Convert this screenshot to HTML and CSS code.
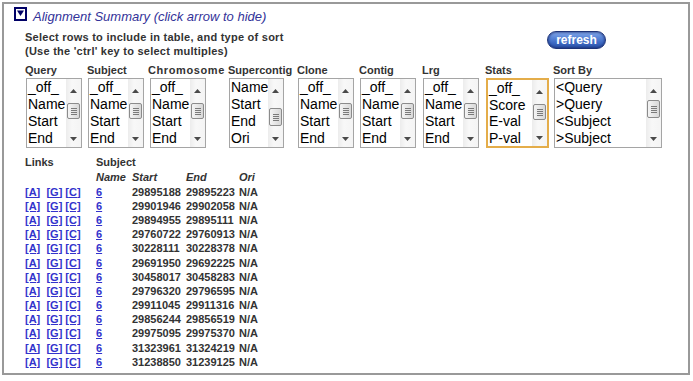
FILE: index.html
```html
<!DOCTYPE html>
<html>
<head>
<meta charset="utf-8">
<title>Alignment Summary</title>
<link rel="stylesheet" href="styles.css">
</head>
<body>
<div class="panel">
  <div class="title">
    <span class="toggle"><svg width="13" height="14" viewBox="0 0 13 14"><rect x="1" y="1" width="11" height="12" fill="#fff" stroke="#000066" stroke-width="2"/><polygon points="3,3.5 10,3.5 6.5,9" fill="#000066"/></svg></span>
    <span class="title-text">Alignment Summary (click arrow to hide)</span>
  </div>

  <div class="intro">
    <div class="help">Select rows to include in table, and type of sort<br>(Use the 'ctrl' key to select multiples)</div>
    <button class="refresh" type="button">refresh</button>
  </div>

  <div class="pickers">
    <div class="picker c-query">
      <div class="plabel">Query</div>
      <div class="listbox">
        <div class="opts"><div>_off_</div><div>Name</div><div>Start</div><div>End</div></div>
        <div class="sb"><div class="up"><svg width="7" height="4"><polygon points="0,4 7,4 3.5,0" fill="#4a4a4a"/></svg></div><div class="thumb"><svg width="6" height="7"><path d="M0 0.5H6M0 2.5H6M0 4.5H6M0 6.5H6" stroke="#7a7a7a" stroke-width="1"/></svg></div><div class="fill"></div><div class="down"><svg width="7" height="4"><polygon points="0,0 7,0 3.5,4" fill="#4a4a4a"/></svg></div></div>
      </div>
    </div>
    <div class="picker c-subject">
      <div class="plabel">Subject</div>
      <div class="listbox">
        <div class="opts"><div>_off_</div><div>Name</div><div>Start</div><div>End</div></div>
        <div class="sb"><div class="up"><svg width="7" height="4"><polygon points="0,4 7,4 3.5,0" fill="#4a4a4a"/></svg></div><div class="thumb"><svg width="6" height="7"><path d="M0 0.5H6M0 2.5H6M0 4.5H6M0 6.5H6" stroke="#7a7a7a" stroke-width="1"/></svg></div><div class="fill"></div><div class="down"><svg width="7" height="4"><polygon points="0,0 7,0 3.5,4" fill="#4a4a4a"/></svg></div></div>
      </div>
    </div>
    <div class="picker c-chrom">
      <div class="plabel lbl-chrom">Chromosome</div>
      <div class="listbox">
        <div class="opts"><div>_off_</div><div>Name</div><div>Start</div><div>End</div></div>
        <div class="sb"><div class="up"><svg width="7" height="4"><polygon points="0,4 7,4 3.5,0" fill="#4a4a4a"/></svg></div><div class="thumb"><svg width="6" height="7"><path d="M0 0.5H6M0 2.5H6M0 4.5H6M0 6.5H6" stroke="#7a7a7a" stroke-width="1"/></svg></div><div class="fill"></div><div class="down"><svg width="7" height="4"><polygon points="0,0 7,0 3.5,4" fill="#4a4a4a"/></svg></div></div>
      </div>
    </div>
    <div class="picker c-super">
      <div class="plabel">Supercontig</div>
      <div class="listbox lb-super">
        <div class="opts"><div>Name</div><div>Start</div><div>End</div><div>Ori</div></div>
        <div class="sb"><div class="up"><svg width="7" height="4"><polygon points="0,4 7,4 3.5,0" fill="#4a4a4a"/></svg></div><div class="thumb thumb-super"><svg width="6" height="7"><path d="M0 0.5H6M0 2.5H6M0 4.5H6M0 6.5H6" stroke="#7a7a7a" stroke-width="1"/></svg></div><div class="fill"></div><div class="down"><svg width="7" height="4"><polygon points="0,0 7,0 3.5,4" fill="#4a4a4a"/></svg></div></div>
      </div>
    </div>
    <div class="picker c-clone">
      <div class="plabel">Clone</div>
      <div class="listbox">
        <div class="opts"><div>_off_</div><div>Name</div><div>Start</div><div>End</div></div>
        <div class="sb"><div class="up"><svg width="7" height="4"><polygon points="0,4 7,4 3.5,0" fill="#4a4a4a"/></svg></div><div class="thumb"><svg width="6" height="7"><path d="M0 0.5H6M0 2.5H6M0 4.5H6M0 6.5H6" stroke="#7a7a7a" stroke-width="1"/></svg></div><div class="fill"></div><div class="down"><svg width="7" height="4"><polygon points="0,0 7,0 3.5,4" fill="#4a4a4a"/></svg></div></div>
      </div>
    </div>
    <div class="picker c-contig">
      <div class="plabel">Contig</div>
      <div class="listbox">
        <div class="opts"><div>_off_</div><div>Name</div><div>Start</div><div>End</div></div>
        <div class="sb"><div class="up"><svg width="7" height="4"><polygon points="0,4 7,4 3.5,0" fill="#4a4a4a"/></svg></div><div class="thumb"><svg width="6" height="7"><path d="M0 0.5H6M0 2.5H6M0 4.5H6M0 6.5H6" stroke="#7a7a7a" stroke-width="1"/></svg></div><div class="fill"></div><div class="down"><svg width="7" height="4"><polygon points="0,0 7,0 3.5,4" fill="#4a4a4a"/></svg></div></div>
      </div>
    </div>
    <div class="picker c-lrg">
      <div class="plabel">Lrg</div>
      <div class="listbox">
        <div class="opts"><div>_off_</div><div>Name</div><div>Start</div><div>End</div></div>
        <div class="sb"><div class="up"><svg width="7" height="4"><polygon points="0,4 7,4 3.5,0" fill="#4a4a4a"/></svg></div><div class="thumb"><svg width="6" height="7"><path d="M0 0.5H6M0 2.5H6M0 4.5H6M0 6.5H6" stroke="#7a7a7a" stroke-width="1"/></svg></div><div class="fill"></div><div class="down"><svg width="7" height="4"><polygon points="0,0 7,0 3.5,4" fill="#4a4a4a"/></svg></div></div>
      </div>
    </div>
    <div class="picker c-stats">
      <div class="plabel">Stats</div>
      <div class="listbox lb-stats">
        <div class="opts"><div>_off_</div><div>Score</div><div>E-val</div><div>P-val</div></div>
        <div class="sb"><div class="up"><svg width="7" height="4"><polygon points="0,4 7,4 3.5,0" fill="#4a4a4a"/></svg></div><div class="thumb"><svg width="6" height="7"><path d="M0 0.5H6M0 2.5H6M0 4.5H6M0 6.5H6" stroke="#7a7a7a" stroke-width="1"/></svg></div><div class="fill"></div><div class="down"><svg width="7" height="4"><polygon points="0,0 7,0 3.5,4" fill="#4a4a4a"/></svg></div></div>
      </div>
    </div>
    <div class="picker c-sort">
      <div class="plabel">Sort By</div>
      <div class="listbox lb-sort">
        <div class="opts"><div>&lt;Query</div><div>&gt;Query</div><div>&lt;Subject</div><div>&gt;Subject</div></div>
        <div class="sb"><div class="up"><svg width="7" height="4"><polygon points="0,4 7,4 3.5,0" fill="#4a4a4a"/></svg></div><div class="thumb thumb-sort"><svg width="6" height="7"><path d="M0 0.5H6M0 2.5H6M0 4.5H6M0 6.5H6" stroke="#7a7a7a" stroke-width="1"/></svg></div><div class="fill"></div><div class="down"><svg width="7" height="4"><polygon points="0,0 7,0 3.5,4" fill="#4a4a4a"/></svg></div></div>
      </div>
    </div>
  </div>

  <table class="results">
    <colgroup><col class="k-links"><col class="k-name"><col class="k-start"><col class="k-end"><col class="k-ori"></colgroup>
    <thead>
      <tr class="h1"><th>Links</th><th colspan="4">Subject</th></tr>
      <tr class="h2"><th></th><th class="it">Name</th><th class="it">Start</th><th class="it">End</th><th class="it">Ori</th></tr>
    </thead>
    <tbody>
      <tr><td><a href="#">[A]</a>&nbsp; <a href="#">[G]</a> <a href="#">[C]</a></td><td><a href="#">6</a></td><td>29895188</td><td>29895223</td><td>N/A</td></tr>
      <tr><td><a href="#">[A]</a>&nbsp; <a href="#">[G]</a> <a href="#">[C]</a></td><td><a href="#">6</a></td><td>29901946</td><td>29902058</td><td>N/A</td></tr>
      <tr><td><a href="#">[A]</a>&nbsp; <a href="#">[G]</a> <a href="#">[C]</a></td><td><a href="#">6</a></td><td>29894955</td><td>29895111</td><td>N/A</td></tr>
      <tr><td><a href="#">[A]</a>&nbsp; <a href="#">[G]</a> <a href="#">[C]</a></td><td><a href="#">6</a></td><td>29760722</td><td>29760913</td><td>N/A</td></tr>
      <tr><td><a href="#">[A]</a>&nbsp; <a href="#">[G]</a> <a href="#">[C]</a></td><td><a href="#">6</a></td><td>30228111</td><td>30228378</td><td>N/A</td></tr>
      <tr><td><a href="#">[A]</a>&nbsp; <a href="#">[G]</a> <a href="#">[C]</a></td><td><a href="#">6</a></td><td>29691950</td><td>29692225</td><td>N/A</td></tr>
      <tr><td><a href="#">[A]</a>&nbsp; <a href="#">[G]</a> <a href="#">[C]</a></td><td><a href="#">6</a></td><td>30458017</td><td>30458283</td><td>N/A</td></tr>
      <tr><td><a href="#">[A]</a>&nbsp; <a href="#">[G]</a> <a href="#">[C]</a></td><td><a href="#">6</a></td><td>29796320</td><td>29796595</td><td>N/A</td></tr>
      <tr><td><a href="#">[A]</a>&nbsp; <a href="#">[G]</a> <a href="#">[C]</a></td><td><a href="#">6</a></td><td>29911045</td><td>29911316</td><td>N/A</td></tr>
      <tr><td><a href="#">[A]</a>&nbsp; <a href="#">[G]</a> <a href="#">[C]</a></td><td><a href="#">6</a></td><td>29856244</td><td>29856519</td><td>N/A</td></tr>
      <tr><td><a href="#">[A]</a>&nbsp; <a href="#">[G]</a> <a href="#">[C]</a></td><td><a href="#">6</a></td><td>29975095</td><td>29975370</td><td>N/A</td></tr>
      <tr><td><a href="#">[A]</a>&nbsp; <a href="#">[G]</a> <a href="#">[C]</a></td><td><a href="#">6</a></td><td>31323961</td><td>31324219</td><td>N/A</td></tr>
      <tr><td><a href="#">[A]</a>&nbsp; <a href="#">[G]</a> <a href="#">[C]</a></td><td><a href="#">6</a></td><td>31238850</td><td>31239125</td><td>N/A</td></tr>
    </tbody>
  </table>
</div>
</body>
</html>
```

FILE: styles.css
```css
* { box-sizing: border-box; }
html, body { margin: 0; padding: 0; background: #fff; }
body { font-family: "Liberation Sans", Arial, sans-serif; color: #333; }

.panel {
  margin: 2px 3px 0 2px;
  border: 2px solid #999;
  height: 373px;
  padding: 3px 0 0 10px;
}

.title { display: flex; align-items: flex-start; }
.toggle { display: block; width: 13px; height: 14px; }
.toggle svg { display: block; }
.title-text {
  margin: 2px 0 0 6px;
  font-size: 13px;
  line-height: 16px;
  font-style: italic;
  color: #333399;
}

.intro { display: flex; align-items: flex-start; margin: 5px 0 0 11px; }
.help { width: 522px; font-size: 11px; line-height: 14px; font-weight: bold; color: #333; letter-spacing: 0.25px; }
.refresh {
  margin-top: 1px;
  width: 59px; height: 18px;
  padding: 0;
  border: 1px solid #1e3478;
  border-radius: 9px;
  background: linear-gradient(#86aaea 0%, #5a86d8 35%, #3c68c2 70%, #2c52a6 100%);
  box-shadow: inset 0 0 2px 1px rgba(20,40,110,.55);
  color: #fff;
  font-family: "Liberation Sans", Arial, sans-serif;
  font-size: 12px;
  font-weight: bold;
  line-height: 15px;
}

.pickers { display: flex; margin: 6px 0 0 11px; }
.picker { flex: none; }
.c-query { width: 62px; }
.c-subject { width: 61px; }
.c-chrom { width: 80px; }
.c-super { width: 69px; }
.c-clone { width: 62px; }
.c-contig { width: 63px; }
.c-lrg { width: 63px; }
.c-stats { width: 68px; }
.c-sort { width: 112px; }

.plabel { font-size: 11px; line-height: 13px; font-weight: bold; color: #333; white-space: nowrap; }
.lbl-chrom { letter-spacing: 0.6px; }

.listbox {
  display: flex;
  margin: 1px 0 0 1px;
  width: 56px; height: 70px;
  border: 1px solid #a5a5a5;
  background: #fff;
}
.c-chrom .listbox { margin-left: 2px; }
.lb-super { width: 55px; }
.lb-stats { width: 63px; border: 2px solid #e4ad4a; }
.lb-sort { width: 108px; }

.opts {
  flex: 1;
  overflow: hidden;
  padding-left: 1px;
  font-size: 14px;
  line-height: 17px;
  color: #000;
  white-space: nowrap;
}
.lb-stats .opts { padding-left: 1px; line-height: 16.5px; }

.sb {
  flex: none;
  width: 15px;
  display: flex;
  flex-direction: column;
  align-items: center;
  background: linear-gradient(90deg, #ececec, #f8f8f8 40%, #f4f4f4);
}
.up { height: 21px; display: flex; align-items: center; justify-content: center; padding-top: 2px; }
.down { height: 16px; display: flex; align-items: center; justify-content: center; }
.up svg, .down svg, .thumb svg { display: block; }
.fill { flex: 1; }
.thumb {
  margin-top: 3px;
  width: 13px; height: 16px;
  border: 1px solid #8b8b8b;
  border-radius: 2px;
  background: linear-gradient(90deg, #f4f4f4, #e6e6e6 50%, #d8d8d8);
  display: flex; align-items: center; justify-content: center;
}
.thumb-sort { margin-top: 0; height: 18px; }
.thumb-super { margin-top: 8px; height: 18px; }

.results {
  margin: 7px 0 0 11px;
  border-collapse: collapse;
  border-spacing: 0;
  font-size: 11px;
  line-height: 13px;
  font-weight: bold;
  color: #333;
}
.results th, .results td { padding: 0; text-align: left; white-space: nowrap; vertical-align: middle; }
.results th { font-weight: bold; }
.results .it { font-style: italic; }
.k-links { width: 71px; }
.k-name { width: 36px; }
.k-start { width: 54px; }
.k-end { width: 53px; }
.k-ori { width: 40px; }
.h1 th { height: 14px; }
.h2 th { height: 16px; }
.results tbody td { height: 14.2px; }
.results a { color: #3333cc; text-decoration: underline; }
```
